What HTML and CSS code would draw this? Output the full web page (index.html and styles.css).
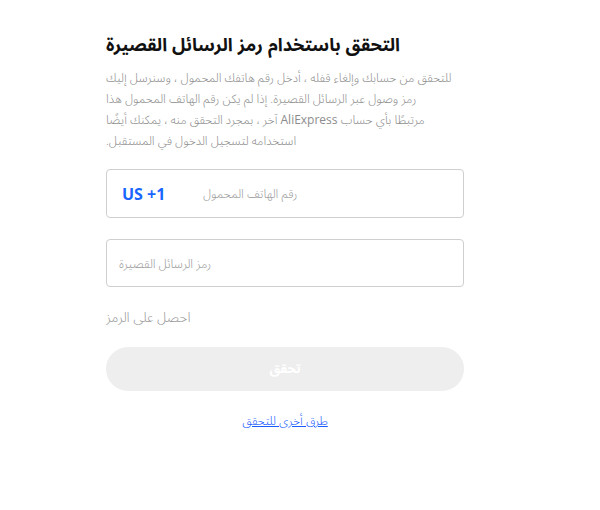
FILE: index.html
```html
<!DOCTYPE html>
<html lang="ar">
<head>
<meta charset="utf-8">
<title>التحقق باستخدام رمز الرسائل القصيرة</title>
<link rel="stylesheet" href="styles.css">
</head>
<body>
<main class="page">
  <h1 class="title" dir="rtl">التحقق باستخدام رمز الرسائل القصيرة</h1>
  <p class="desc" dir="rtl">للتحقق من حسابك وإلغاء قفله ، أدخل رقم هاتفك المحمول ، وسنرسل إليك رمز وصول عبر الرسائل القصيرة. إذا لم يكن رقم الهاتف المحمول هذا<br>مرتبطًا بأي حساب <span class="brand">AliExpress</span> آخر ، بمجرد التحقق منه ، يمكنك أيضًا استخدامه لتسجيل الدخول في المستقبل.</p>
  <label class="field">
    <span class="prefix">US +1</span>
    <input class="input" type="tel" placeholder="رقم الهاتف المحمول">
  </label>
  <label class="field field-code">
    <input class="input" type="text" placeholder="رمز الرسائل القصيرة">
  </label>
  <div class="get-code">احصل على الرمز</div>
  <button class="submit" type="button" disabled>تحقق</button>
  <div class="other"><a class="other-link" href="#">طرق أخرى للتحقق</a></div>
</main>
</body>
</html>
```
FILE: styles.css
```css
html, body {
  margin: 0;
  padding: 0;
  background: #ffffff;
}
body {
  font-family: "Open Sans", "Noto Sans Arabic", serif;
  color: #333;
}
.page {
  width: 358px;
  margin-left: 106px;
  padding-top: 31px;
}
.title {
  margin: 0;
  font-family: "Liberation Sans", "Noto Sans Arabic", serif;
  font-size: 18px;
  font-weight: 700;
  line-height: 28px;
  color: #111;
  text-align: left;
}
.desc {
  max-width: 348px;
  margin: 8px 0 0;
  font-size: 12px;
  font-weight: 300;
  line-height: 21px;
  color: #8c8c8c;
  text-align: left;
}
.brand {
  font-family: "Open Sans", sans-serif;
  font-size: 12px;
  font-weight: 400;
}
.field {
  display: flex;
  align-items: center;
  box-sizing: border-box;
  height: 49px;
  margin-top: 18px;
  border: 1px solid #cfcfcf;
  border-radius: 4px;
  padding: 0 12px 0 15px;
}
.field-code {
  height: 48px;
  margin-top: 21px;
  padding-left: 12px;
}
.prefix {
  flex: 0 0 81px;
  font-size: 16px;
  font-weight: 700;
  color: #1a66ff;
}
.input {
  flex: 1;
  min-width: 0;
  border: 0;
  outline: 0;
  padding: 0;
  margin: 0;
  background: transparent;
  font-family: "Open Sans", "Noto Sans Arabic", serif;
  font-size: 12px;
  font-weight: 300;
  color: #333;
}
.input::placeholder {
  color: #999;
}
.get-code {
  margin-top: 20px;
  font-size: 13.5px;
  font-weight: 300;
  line-height: 20px;
  color: #999;
}
.submit {
  display: block;
  width: 100%;
  height: 44px;
  margin-top: 20px;
  border: 0;
  border-radius: 22px;
  background: #eeeeee;
  color: #ffffff;
  font-family: "Open Sans", "Noto Sans Arabic", serif;
  font-size: 13px;
  font-weight: 700;
}
.other {
  margin-top: 20px;
  text-align: center;
  font-size: 12px;
  font-weight: 300;
  line-height: 20px;
}
.other-link {
  color: #1a5cff;
  text-decoration: underline;
}
```
